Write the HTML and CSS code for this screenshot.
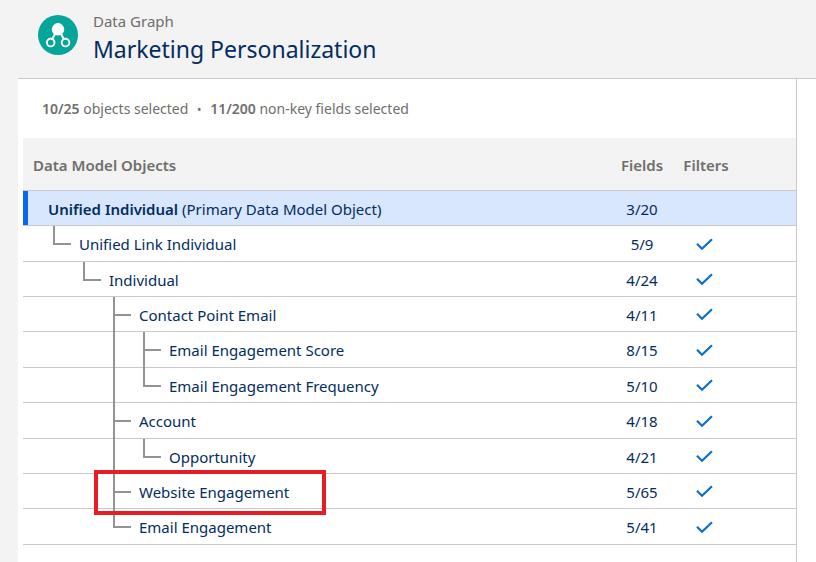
FILE: index.html
```html
<!DOCTYPE html>
<html lang="en">
<head>
  <meta charset="UTF-8">
  <meta name="viewport" content="width=device-width, initial-scale=1.0">
  <title>Marketing Personalization</title>
  <link rel="stylesheet" href="styles.css">
</head>
<body>

  <svg class="defs" aria-hidden="true">
    <symbol id="check" viewBox="0 0 18 14">
      <path d="M1 6.8 L6 11.8 L16 2.2" fill="none" stroke="#0b6fcb" stroke-width="2.2"/>
    </symbol>
  </svg>

  <header class="page-header">
    <svg class="logo" viewBox="0 0 40 40" aria-hidden="true">
      <circle cx="20" cy="20" r="20" fill="#06a59a"/>
      <path d="M17.5 18 L14 24.5 M22.5 18 L26 24.5" stroke="#fff" stroke-width="2"/>
      <circle cx="20" cy="14.3" r="6.2" fill="#fff"/>
      <circle cx="12.7" cy="27.6" r="3.8" fill="none" stroke="#fff" stroke-width="1.9"/>
      <circle cx="27.5" cy="27.6" r="3.8" fill="none" stroke="#fff" stroke-width="1.9"/>
    </svg>
    <div>
      <p class="kicker">Data Graph</p>
      <h1>Marketing Personalization</h1>
    </div>
  </header>

  <main class="content">
    <section class="panel">
      <p class="summary"><b>10/25</b> objects selected <span class="dot">•</span> <b>11/200</b> non-key fields selected</p>

      <table class="objects">
        <thead>
          <tr>
            <th class="name" scope="col">Data Model Objects</th>
            <th class="fields" scope="col">Fields</th>
            <th class="filters" scope="col">Filters</th>
          </tr>
        </thead>
        <tbody>
          <tr class="selected">
            <td><div class="node root"><span><b>Unified Individual</b> (Primary Data Model Object)</span></div></td>
            <td class="fields">3/20</td>
            <td class="filters"></td>
          </tr>
          <tr>
            <td><div class="node"><i class="elbow"></i><span>Unified Link Individual</span></div></td>
            <td class="fields">5/9</td>
            <td class="filters"><svg class="check" role="img" aria-label="Yes"><use href="#check"/></svg></td>
          </tr>
          <tr>
            <td><div class="node"><i class="gap"></i><i class="elbow"></i><span>Individual</span></div></td>
            <td class="fields">4/24</td>
            <td class="filters"><svg class="check" role="img" aria-label="Yes"><use href="#check"/></svg></td>
          </tr>
          <tr>
            <td><div class="node"><i class="gap"></i><i class="gap"></i><i class="branch"></i><span>Contact Point Email</span></div></td>
            <td class="fields">4/11</td>
            <td class="filters"><svg class="check" role="img" aria-label="Yes"><use href="#check"/></svg></td>
          </tr>
          <tr>
            <td><div class="node"><i class="gap"></i><i class="gap"></i><i class="gap line"></i><i class="branch"></i><span>Email Engagement Score</span></div></td>
            <td class="fields">8/15</td>
            <td class="filters"><svg class="check" role="img" aria-label="Yes"><use href="#check"/></svg></td>
          </tr>
          <tr>
            <td><div class="node"><i class="gap"></i><i class="gap"></i><i class="gap line"></i><i class="elbow"></i><span>Email Engagement Frequency</span></div></td>
            <td class="fields">5/10</td>
            <td class="filters"><svg class="check" role="img" aria-label="Yes"><use href="#check"/></svg></td>
          </tr>
          <tr>
            <td><div class="node"><i class="gap"></i><i class="gap"></i><i class="branch"></i><span>Account</span></div></td>
            <td class="fields">4/18</td>
            <td class="filters"><svg class="check" role="img" aria-label="Yes"><use href="#check"/></svg></td>
          </tr>
          <tr>
            <td><div class="node"><i class="gap"></i><i class="gap"></i><i class="gap line"></i><i class="elbow"></i><span>Opportunity</span></div></td>
            <td class="fields">4/21</td>
            <td class="filters"><svg class="check" role="img" aria-label="Yes"><use href="#check"/></svg></td>
          </tr>
          <tr>
            <td><div class="node marked"><i class="gap"></i><i class="gap"></i><i class="branch"></i><span>Website Engagement</span></div></td>
            <td class="fields">5/65</td>
            <td class="filters"><svg class="check" role="img" aria-label="Yes"><use href="#check"/></svg></td>
          </tr>
          <tr>
            <td><div class="node"><i class="gap"></i><i class="gap"></i><i class="elbow"></i><span>Email Engagement</span></div></td>
            <td class="fields">5/41</td>
            <td class="filters"><svg class="check" role="img" aria-label="Yes"><use href="#check"/></svg></td>
          </tr>
        </tbody>
      </table>
    </section>
  </main>

</body>
</html>
```

FILE: styles.css
```css
*,
*::before,
*::after {
  box-sizing: border-box;
}

body {
  margin: 0;
  min-height: 100vh;
  display: flex;
  flex-direction: column;
  background: #f3f3f3;
  color: #032d60;
  font-family: "Segoe UI", "Noto Sans", sans-serif;
  font-size: 15px;
  line-height: 20px;
}

h1,
p {
  margin: 0;
}

b,
th {
  font-weight: 600;
}

.defs {
  position: absolute;
  width: 0;
  height: 0;
}

.page-header {
  display: flex;
  gap: 15px;
  height: 78px;
  padding: 11px 38px 0;
}

.logo {
  width: 40px;
  height: 40px;
  margin-top: 4px;
}

.kicker {
  color: #706e6b;
}

h1 {
  font-size: 23px;
  font-weight: 400;
  line-height: 36px;
}

.content {
  flex: 1;
  display: flex;
  margin-left: 18px;
  padding-right: 19px;
  border-top: 1px solid #c9c9c9;
  background: #fff;
}

.panel {
  flex: 1;
  padding-left: 5px;
  border-right: 1px solid #c9c9c9;
}

.summary {
  padding: 20px 19px 19px;
  color: #706e6b;
  font-size: 14px;
}

.dot {
  margin: 0 5px;
  font-size: 12px;
  line-height: 1;
}

.objects {
  width: 100%;
  border-spacing: 0;
}

th,
td {
  padding: 0;
  border-bottom: 1px solid #c9c9c9;
}

th {
  height: 53px;
  padding-top: 2px;
  background: #f3f3f3;
  color: #706e6b;
  text-align: left;
}

th.name {
  padding-left: 10px;
}

.fields {
  width: 64px;
  text-align: center;
}

.filters {
  width: 122px;
  padding-right: 58px;
  text-align: center;
}

td.fields {
  padding-top: 1px;
}

td.filters {
  padding-right: 60px;
}

.check {
  display: block;
  width: 18px;
  height: 14px;
  margin: 0 auto;
}

.selected td {
  background: #d8e6fe;
}

/* tree column */
.node {
  display: flex;
  height: 34px;
  padding-left: 30px;
  line-height: 36px;
  white-space: nowrap;
}

tr:nth-child(5n) .node,
tr:nth-child(5n+2) .node {
  height: 35px;
}

.root {
  padding-left: 20px;
  border-left: 5px solid #0b66f0;
}

.gap {
  width: 30px;
}

.branch,
.elbow {
  width: 26px;
}

/* reaches over the row border so the line is unbroken */
.line,
.branch {
  margin-bottom: -1px;
  border-left: 2px solid #939393;
}

.branch::before,
.elbow::before {
  content: "";
  display: block;
  width: 18px;
  height: 19px;
  border-bottom: 2px solid #939393;
}

.branch::before {
  width: 16px;
}

.elbow::before {
  border-left: 2px solid #939393;
}

.marked {
  position: relative;
}

.marked::after {
  content: "";
  position: absolute;
  top: -4px;
  bottom: -7px;
  left: 71px;
  width: 232px;
  border: 4px solid #e81c24;
}
```
